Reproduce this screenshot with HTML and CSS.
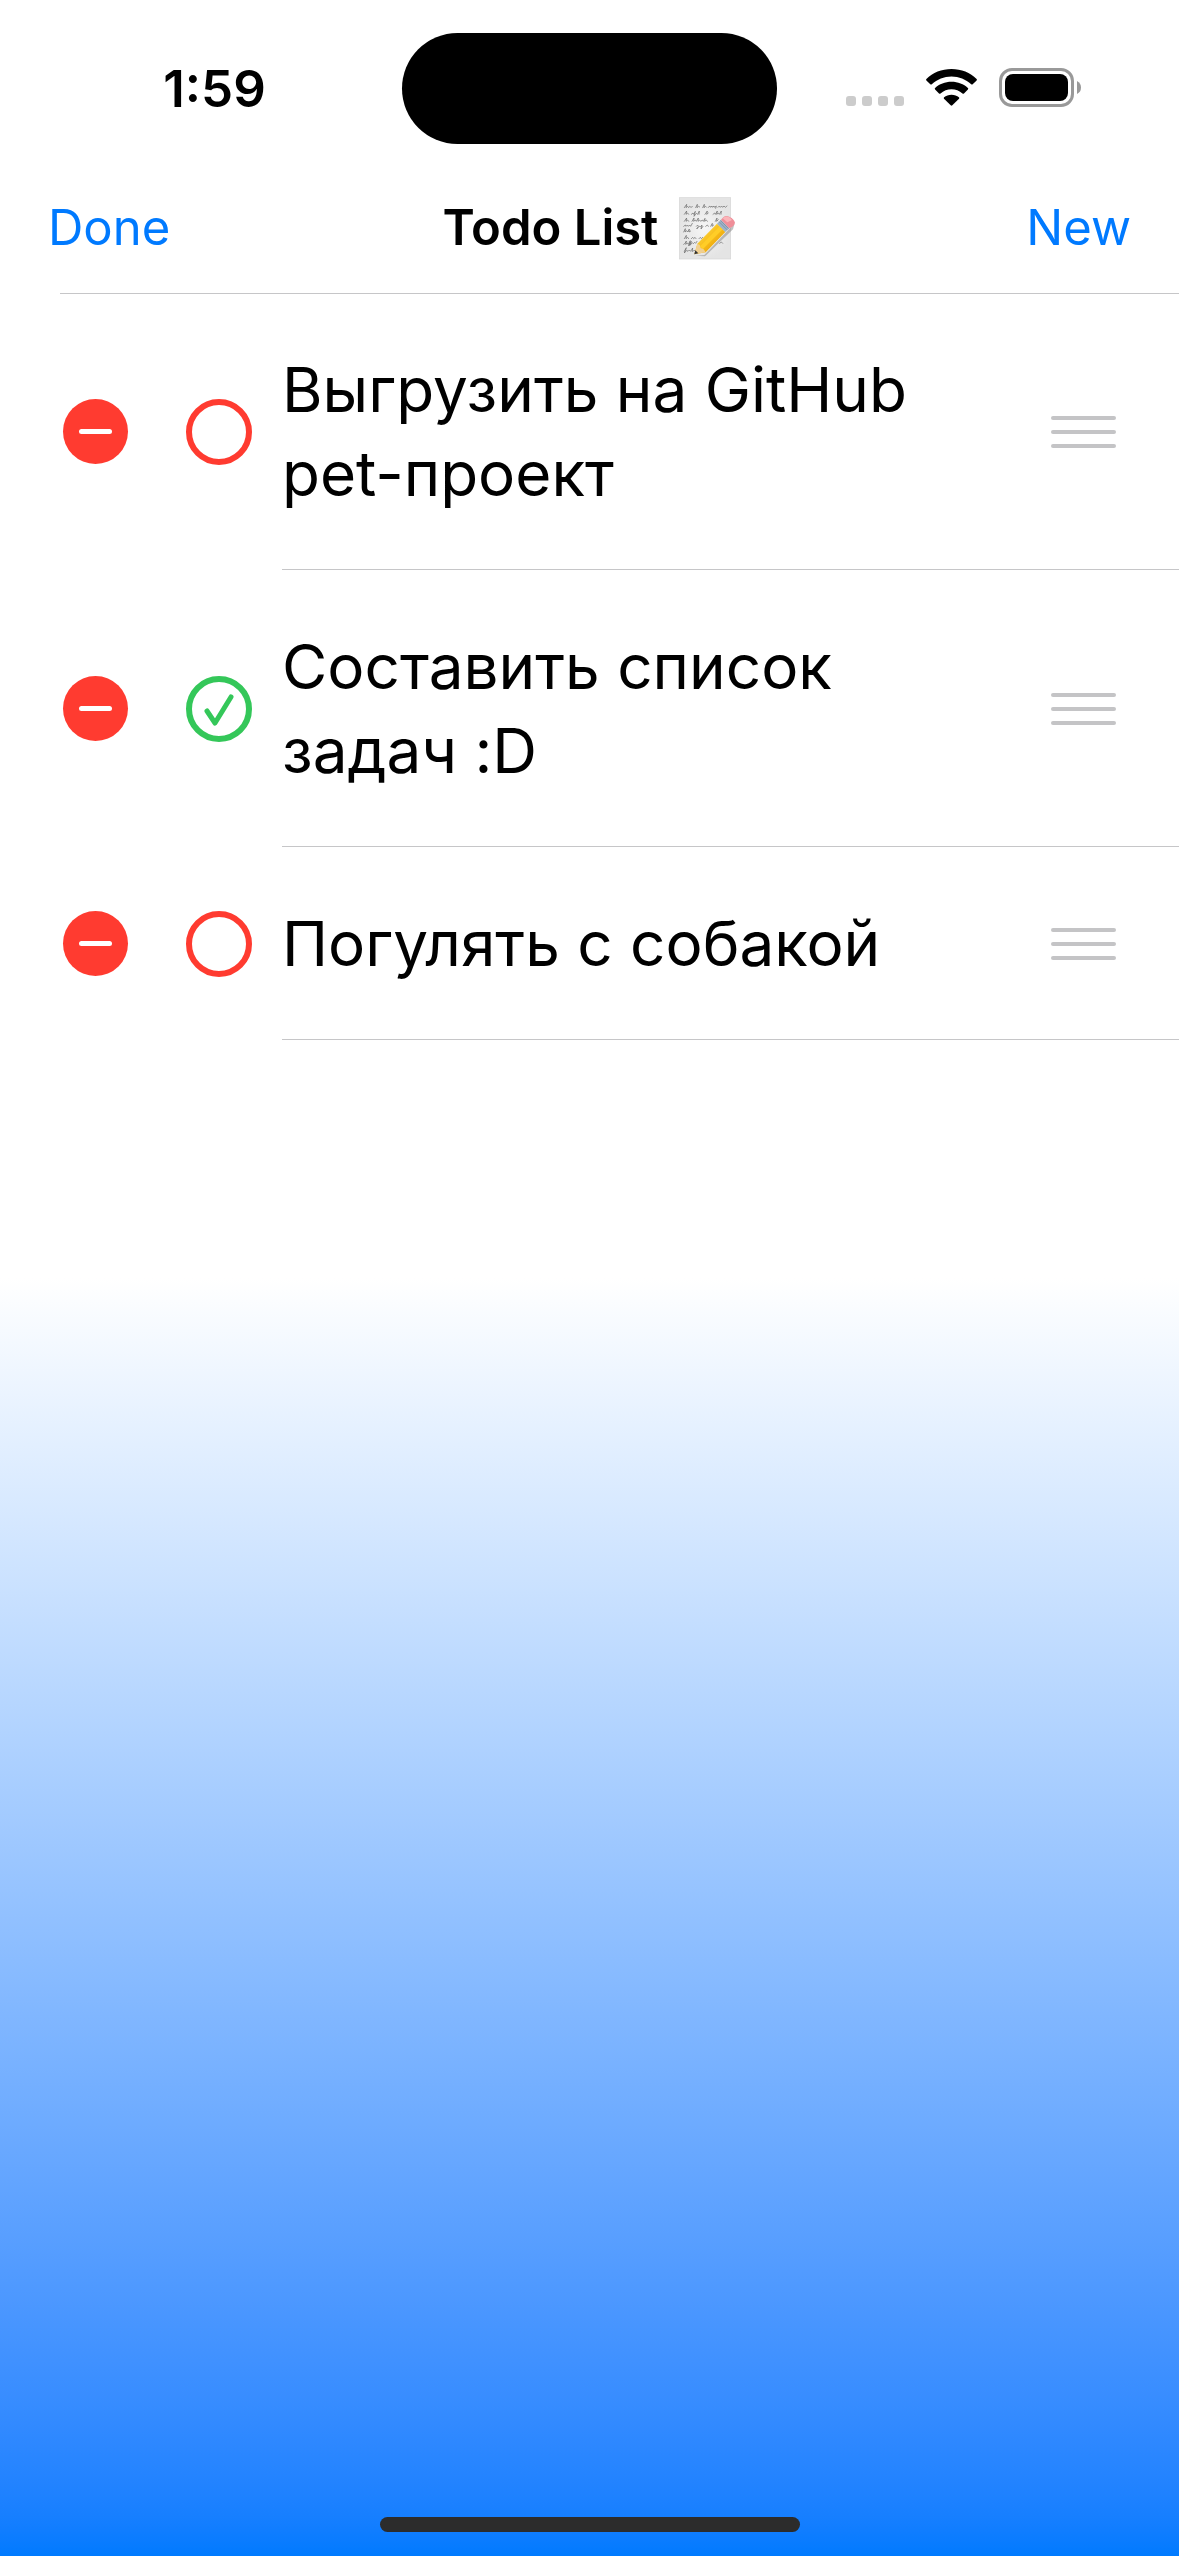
FILE: index.html
```html
<!DOCTYPE html>
<html lang="ru">
<head>
<meta charset="utf-8">
<meta name="viewport" content="width=device-width, initial-scale=1">
<title>Todo List</title>
<link rel="stylesheet" href="styles.css">
</head>
<body>
<div class="app">
  <div class="status">
    <time class="status-time">1:59</time>
    <div class="island"></div>
    <div class="status-icons">
      <svg class="cell" viewBox="0 0 58 11" aria-hidden="true">
        <rect width="10" height="10" rx="3"/><rect x="16" width="10" height="10" rx="3"/><rect x="32" width="10" height="10" rx="3"/><rect x="48" width="10" height="10" rx="3"/>
      </svg>
      <svg class="wifi" viewBox="0 0 51 38" aria-hidden="true">
        <path d="M25.500 0C35.300 0 44.300 3.700 50.600 9.900Q51.300 10.700 50.600 11.400L46.700 15.200Q46 15.900 45.200 15.200C39.800 10.200 33 7.400 25.500 7.400S11.200 10.200 5.800 15.200Q5 15.900 4.300 15.200L.4 11.400Q-.3 10.700 .4 9.900C6.700 3.700 15.700 0 25.500 0Z"/>
        <path d="M25.500 12.800C31.900 12.800 37.700 15.100 41.900 19Q42.700 19.700 41.900 20.500L38 24.400Q37.200 25.100 36.500 24.400C33.400 21.700 29.600 20.200 25.500 20.200S17.600 21.700 14.500 24.400Q13.800 25.100 13 24.400L9.100 20.500Q8.300 19.700 9.100 19C13.300 15.100 19.100 12.800 25.500 12.800Z"/>
        <path d="M25.500 25.700C28.400 25.700 31 26.600 32.900 28.200Q33.700 29 33 29.700L26.300 36.300Q25.500 37 24.700 36.300L18 29.700Q17.300 29 18.100 28.200C20 26.600 22.600 25.700 25.500 25.700Z"/>
      </svg>
      <svg class="battery" viewBox="0 0 82 39" aria-hidden="true">
        <rect x="1.500" y="1.500" width="72" height="36" rx="11.500" fill="none" stroke="#999" stroke-width="3"/>
        <rect x="6" y="6" width="63" height="27" rx="8"/>
        <path d="M78 13Q82 15 82 19.500T78 26Z" fill="#999"/>
      </svg>
    </div>
  </div>

  <header class="nav">
    <button class="nav-btn" type="button">Done</button>
    <div class="nav-title">
      <h1>Todo List</h1>
      <svg class="memo" viewBox="54 48 171 189" role="img" aria-label="memo">
        <defs>
          <radialGradient id="paper"><stop offset="0" stop-color="#f6f6f6"/><stop offset="1" stop-color="#e4e4e4"/></radialGradient>
          <linearGradient id="wood" x1="0" y1="0" x2="1" y2="1"><stop offset="0.2" stop-color="#ffd83c"/><stop offset="0.6" stop-color="#f3b313"/><stop offset="1" stop-color="#c98506"/></linearGradient>
        </defs>
        <rect x="55" y="50" width="154" height="184" fill="url(#paper)" stroke="#d5d5d5" stroke-width="2"/>
        <g fill="none" stroke="#666" stroke-width="2" stroke-linecap="round" stroke-linejoin="round">
          <path d="M70 80l7-10-2 10 5-4 3 4 3-4 4 3 4-2M104 80l5-10-1 10 5-4 3 2M125 80l5-10-1 10 5-4 3 3M142 79l5-4 2 4 4-4 2 4 4-4 2 4 5-4-2 7M171 79l4-4 3 4 4-4 3 4 4-4 4 4 5-4"/>
          <path d="M70 100l7-10-2 10 5-4 3 4M91 100l5-4 2 4 5-9-4 15 7-9 4 3 5-10-1 10M132 100l7-10-2 10 5-4M156 100l5-4 2 4 6-10-2 10 5-4 3 4 6-10-1 10"/>
          <path d="M70 121l7-10-2 10 5-4 3 4M93 121l6-10-1 10 5-4 3 4 6-10-1 10 5-4 3 4 5-4 3 4 5-9-1 9 5-4 3 4M163 121l5-10-1 10 5-5"/>
          <path d="M68 136l5-4 2 4 4-4 3 4 4-4 3 4 5-9M106 136l4-4 2 4-5 8 8-8 4 1 4-5-3 12 6-8M134 136l5-4 3 4M149 136l5-9-1 9 5-4"/>
          <path d="M68 153l5-10-1 10 5-4 3 4 5-9-1 9 5-3"/>
          <path d="M70 173l6-10-1 10 5-4 3 4M91 173l4-4 3 4 4-4 3 4M114 173l4-4 3 4 4-4"/>
          <path d="M68 190l5-4 3-6-2 10 5-4 3 4 6-11-5 16 8-14-4 12 7-8 3 3 4-4 3 3 4-6M176 187l5-4 4 4"/>
          <path d="M70 211l6-11-6 16 7-8 4 3 4-4 4 4 6-10-1 10M96 211l4-4 3 4"/>
        </g>
        <path d="M104 224L130 222 221 127 216 145 132 226Z" fill="#777" opacity=".45"/>
        <path d="M100 220L109 188 168 128 193 153 134 214Z" fill="url(#wood)"/>
        <path d="M117 196L176 136 185 145 125 205Z" fill="#ffcd27"/>
        <path d="M100 220L109 188 116 192 119 201 128 205 134 214Z" fill="#f0cf91"/>
        <path d="M100 220L103 208 112 217Z" fill="#333"/>
        <path d="M168 128L180 116 205 141 193 153Z" fill="#9db4c9"/>
        <path d="M174 122L199 147M178 118L203 143" stroke="#6f8799" stroke-width="2"/>
        <path d="M180 116L187 109Q195 102 206 108 219 114 222 125 221 131 214 137L205 142Z" fill="#ef8f99"/>
        <path d="M185 112Q193 103 205 109L213 117 199 124Z" fill="#fbb4b9"/>
      </svg>
    </div>
    <button class="nav-btn nav-btn-end" type="button">New</button>
  </header>

  <ul class="list">
    <li class="row">
      <button class="remove" type="button" aria-label="Delete"></button>
      <span class="tick"><input type="checkbox" id="t1"><svg viewBox="0 0 66 66" aria-hidden="true"><path d="M21 35L29 47 45 21"/></svg></span>
      <div class="body"><label class="text" for="t1">Выгрузить на GitHub pet-проект</label>
        <button class="grip" type="button" aria-label="Reorder"><span></span><span></span><span></span></button></div>
    </li>
    <li class="row">
      <button class="remove" type="button" aria-label="Delete"></button>
      <span class="tick"><input type="checkbox" id="t2" checked><svg viewBox="0 0 66 66" aria-hidden="true"><path d="M21 35L29 47 45 21"/></svg></span>
      <div class="body"><label class="text" for="t2">Составить список задач :D</label>
        <button class="grip" type="button" aria-label="Reorder"><span></span><span></span><span></span></button></div>
    </li>
    <li class="row">
      <button class="remove" type="button" aria-label="Delete"></button>
      <span class="tick"><input type="checkbox" id="t3"><svg viewBox="0 0 66 66" aria-hidden="true"><path d="M21 35L29 47 45 21"/></svg></span>
      <div class="body"><label class="text" for="t3">Погулять с собакой</label>
        <button class="grip" type="button" aria-label="Reorder"><span></span><span></span><span></span></button></div>
    </li>
  </ul>

  <div class="home"></div>
</div>
</body>
</html>
```
FILE: styles.css
```css
* { box-sizing: border-box; }

body {
  margin: 0;
  color: #000;
  font-family: Inter, "Liberation Sans", sans-serif;
}

button {
  padding: 0;
  border: 0;
  background: none;
  font: inherit;
}

.app {
  display: flex;
  flex-direction: column;
  min-height: 100vh;
  padding-bottom: 24px;
  background: linear-gradient(in oklab, #fff 50%, #007aff);
}

/* Status bar */
.status {
  display: grid;
  grid-template-columns: 1fr auto 1fr;
  align-items: center;
  padding-top: 33px;
}

.status-time {
  padding-left: 27px;
  text-align: center;
  font-size: 51px;
  line-height: 60px;
  font-weight: 600;
}

.island {
  width: 375px;
  height: 111px;
  border-radius: 56px;
  background: #000;
}

.status-icons {
  display: flex;
  justify-content: flex-end;
  align-items: flex-end;
  gap: 22px;
  padding: 0 98px 2px 0;
}

.cell { width: 58px; height: 11px; fill: #ccc; }
.wifi { width: 51px; height: 38px; }
.battery { width: 82px; height: 39px; }

/* Navigation bar */
.nav {
  display: grid;
  grid-template-columns: 1fr auto 1fr;
  align-items: center;
  margin-top: 18px;
  padding: 1px 48px 0;
  height: 131px;
}

.nav-btn {
  color: #007aff;
  font-size: 49px;
  line-height: 60px;
  text-align: left;
}

.nav-btn-end { text-align: right; }

.nav-title {
  display: flex;
  align-items: center;
  gap: 21px;
}

.nav-title h1 {
  margin: 0;
  font-size: 49px;
  line-height: 60px;
  font-weight: 600;
}

.memo { width: 57px; height: 63px; }

/* Tasks */
.list {
  margin: 0;
  padding: 0;
  list-style: none;
}

.list::before {
  content: "";
  display: block;
  height: 1px;
  margin: 0 0 -1px 60px;
  background: #c6c6c8;
}

.row {
  display: flex;
  align-items: center;
  padding-left: 63px;
}

.remove {
  display: grid;
  place-items: center;
  flex: none;
  width: 65px;
  height: 65px;
  border-radius: 50%;
  background: #ff3b30;
}

.remove::before {
  content: "";
  width: 33px;
  height: 5px;
  border-radius: 3px;
  background: #fff;
}

.tick {
  display: grid;
  flex: none;
  margin: 0 30px 0 58px;
}

.tick > * { grid-area: 1 / 1; }

.tick input {
  appearance: none;
  width: 66px;
  height: 66px;
  margin: 0;
  border: 6px solid #ff3b30;
  border-radius: 50%;
}

.tick svg {
  visibility: hidden;
  width: 66px;
  height: 66px;
  fill: none;
  stroke: #34c759;
  stroke-width: 5;
  stroke-linecap: round;
  stroke-linejoin: round;
  pointer-events: none;
}

.tick input:checked { border-color: #34c759; }
.tick input:checked + svg { visibility: visible; }

.body {
  display: flex;
  flex: 1;
  align-items: center;
  gap: 51px;
  padding: 55px 63px 53px 0;
  border-bottom: 1px solid #c6c6c8;
}

.text {
  flex: 1;
  max-width: 700px;
  font-size: 62px;
  line-height: 84px;
}

.grip {
  display: grid;
  flex: none;
  gap: 10px;
  width: 65px;
  margin-left: auto;
}

.grip span {
  height: 4px;
  border-radius: 2px;
  background: #c4c4c6;
}

/* Home indicator */
.home {
  align-self: center;
  width: 420px;
  height: 15px;
  margin-top: auto;
  border-radius: 8px;
  background: #2c2c2c;
}
```
